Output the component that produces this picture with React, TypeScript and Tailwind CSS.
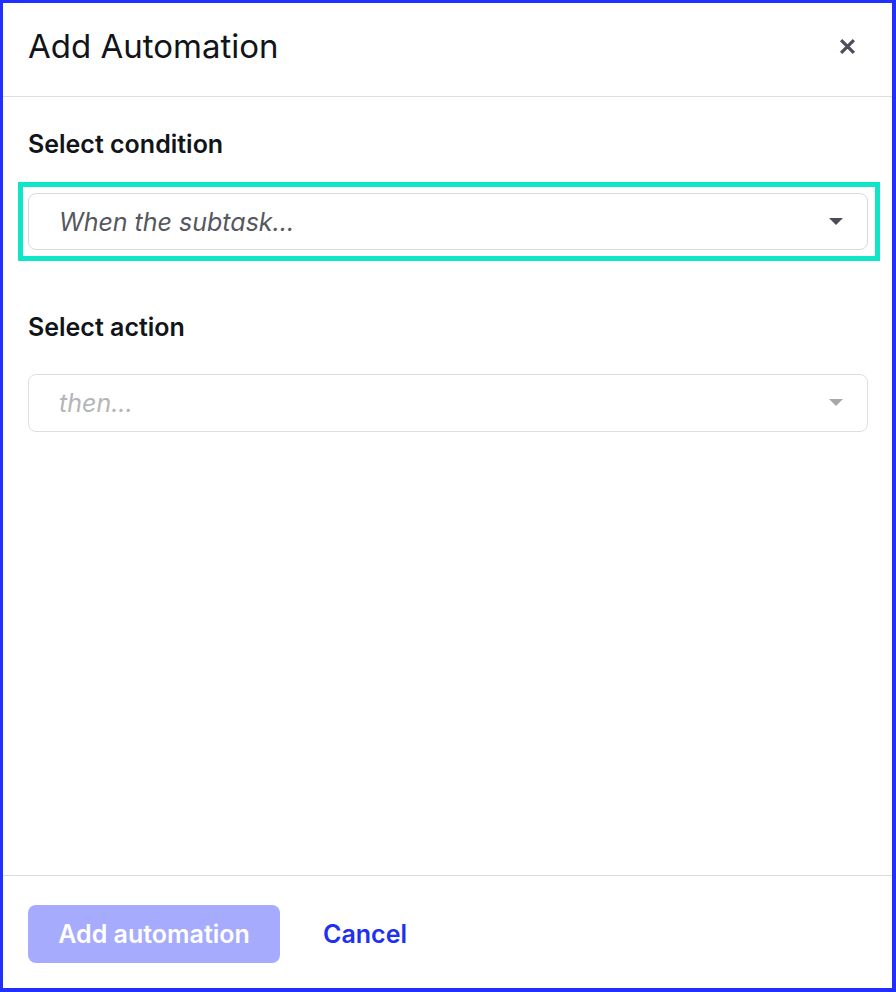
const Caret = ({ className }: { className: string }) => (
  <svg viewBox="0 0 14 8" className={className} fill="currentColor">
    <path d="M0 0h14L7 7z" />
  </svg>
);

export default function App() {
  return (
    <div
      className="w-[896px] h-[992px] bg-white flex flex-col border-t-[3px] border-l-[3px] border-r-4 border-b-4 border-[#2130ff] text-[#111418]"
      style={{ fontFamily: 'Inter, "Liberation Sans", sans-serif' }}
    >
      {/* header */}
      <div className="flex items-center justify-between border-b border-[#dedede] h-[94px] pl-[25px] pr-[36px] pb-[7px]">
        <h1 className="text-[33px] leading-[40px] font-normal">Add Automation</h1>
        <button className="text-[#4b5058]">
          <svg viewBox="0 0 16 16" className="w-[17px] h-[17px]" stroke="currentColor" strokeWidth="3" strokeLinecap="butt">
            <path d="M2 2l12 12M14 2L2 14" />
          </svg>
        </button>
      </div>

      {/* content */}
      <div className="flex-1 pl-[25px] pr-[24px] pt-[32px]">
        <h2 className="text-[25px] leading-[30px] font-semibold">Select condition</h2>
        <div className="mt-[23px] -ml-[10px] -mr-[12px] border-[5px] border-[#0fe6c8] pl-[5px] pr-[7px] py-[6px]">
          <div className="h-[57px] rounded-[8px] border border-[#d9d9d9] flex items-center justify-between pl-[30px] pr-[24px]">
            <span className="italic text-[25px] leading-[30px] text-[#55585e]">When the subtask...</span>
            <Caret className="w-[14px] h-[8px] text-[#4b4e54]" />
          </div>
        </div>

        <h2 className="text-[25px] leading-[30px] font-semibold mt-[51px]">Select action</h2>
        <div className="mt-[32px] h-[58px] rounded-[8px] border border-[#dedede] flex items-center justify-between pl-[30px] pr-[24px]">
          <span className="italic text-[25px] leading-[30px] text-[#b5b5b8]">then...</span>
          <Caret className="w-[14px] h-[8px] text-[#a8a8ab]" />
        </div>
      </div>

      {/* footer */}
      <div className="border-t border-[#dedede] h-[113px] flex items-center gap-[43px] pl-[25px] pt-[3px]">
        <button className="h-[58px] w-[252px] rounded-[8px] bg-[#a6abfd] text-white text-[25px] leading-[30px] font-semibold">
          Add automation
        </button>
        <button className="text-[25px] leading-[30px] font-semibold text-[#2130f0]">Cancel</button>
      </div>
    </div>
  );
}
